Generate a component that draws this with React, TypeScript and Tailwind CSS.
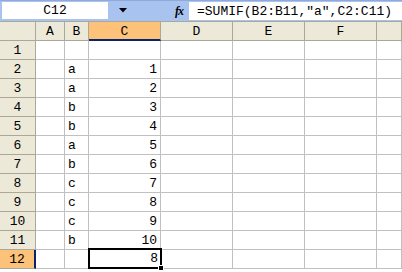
const cols = ["A", "B", "C", "D", "E", "F", ""];

const data: Record<number, { b?: string; c?: string }> = {
  2: { b: "a", c: "1" },
  3: { b: "a", c: "2" },
  4: { b: "b", c: "3" },
  5: { b: "b", c: "4" },
  6: { b: "a", c: "5" },
  7: { b: "b", c: "6" },
  8: { b: "c", c: "7" },
  9: { b: "c", c: "8" },
  10: { b: "c", c: "9" },
  11: { b: "b", c: "10" },
  12: { c: "8" },
};

const gridCols = "grid grid-cols-[36px_29px_24px_72px_72px_72px_72px_25px]";

export default function App() {
  const rows = Array.from({ length: 12 }, (_, i) => i + 1);

  return (
    <div
      className="w-[402px] h-[272px] overflow-hidden bg-white text-[13px] text-black"
      style={{ fontFamily: '"Liberation Mono", "DejaVu Sans Mono", monospace' }}
    >
      {/* formula bar */}
      <div className="h-[21px] bg-[#a9c3f0] border-t border-[#8fa9d8] flex items-start pt-[1px]">
        <div className="ml-[2px] w-[106px] h-[17px] bg-white flex items-center justify-center leading-none">
          C12
        </div>
        <div className="w-[30px] h-[17px] flex items-center justify-center">
          <svg width="8" height="5" viewBox="0 0 8 5">
            <polygon points="0,0 8,0 4,4.5" fill="#000" />
          </svg>
        </div>
        <div className="flex-1" />
        <div
          className="w-[14px] h-[17px] flex items-center justify-center italic text-[12px] leading-none mr-[3px]"
          style={{ fontFamily: '"Liberation Serif", serif' }}
        >
          <span className="font-bold tracking-[-1px]">fx</span>
        </div>
        <div className="w-[213px] h-[18px] bg-white flex items-center pl-[8px] leading-none whitespace-nowrap">
          =SUMIF(B2:B11,"a",C2:C11)
        </div>
      </div>

      {/* sheet */}
      <div className="border-t border-[#aca899]">
        {/* column header */}
        <div className={gridCols}>
          <div className="h-[19px] bg-[#ece9d8] border-r border-b border-[#aca899]" />
          {cols.map((c) => (
            <div
              key={c || "g"}
              className={
                c === "C"
                  ? "h-[19px] bg-[#fcc27a] border-r border-[#aca899] border-b-2 border-b-[#0a246a] flex items-center justify-center leading-none pt-[1px]"
                  : "h-[19px] bg-[#ece9d8] border-r border-b border-[#aca899] flex items-center justify-center leading-none"
              }
            >
              {c}
            </div>
          ))}
        </div>

        {rows.map((r) => {
          const d = data[r] || {};
          const sel = r === 12;
          return (
            <div key={r} className={gridCols}>
              <div
                className={
                  sel
                    ? "h-[19px] bg-[#fcc27a] border-r-2 border-r-[#0a246a] border-b border-[#aca899] flex items-center justify-center leading-none"
                    : "h-[19px] bg-[#ece9d8] border-r border-b border-[#aca899] flex items-center justify-center leading-none"
                }
              >
                {r}
              </div>
              <div className="h-[19px] border-r border-b border-[#c0c0c0]" />
              <div className="h-[19px] border-r border-b border-[#c0c0c0] flex items-center pl-[3px] leading-none">
                {d.b}
              </div>
              <div
                className={
                  sel
                    ? "relative h-[21px] -mt-[2px] -ml-[1px] w-[74px] border-2 border-black flex items-center justify-end pr-[2px] leading-none"
                    : "h-[19px] border-r border-b border-[#c0c0c0] flex items-center justify-end pr-[3px] leading-none"
                }
              >
                {d.c}
                {sel && (
                  <span className="absolute -right-[4px] -bottom-[4px] w-[6px] h-[6px] bg-black border border-white" />
                )}
              </div>
              <div className="h-[19px] border-r border-b border-[#c0c0c0]" />
              <div className="h-[19px] border-r border-b border-[#c0c0c0]" />
              <div className="h-[19px] border-r border-b border-[#c0c0c0]" />
              <div className="h-[19px] border-r border-b border-[#c0c0c0]" />
            </div>
          );
        })}
      </div>
    </div>
  );
}
